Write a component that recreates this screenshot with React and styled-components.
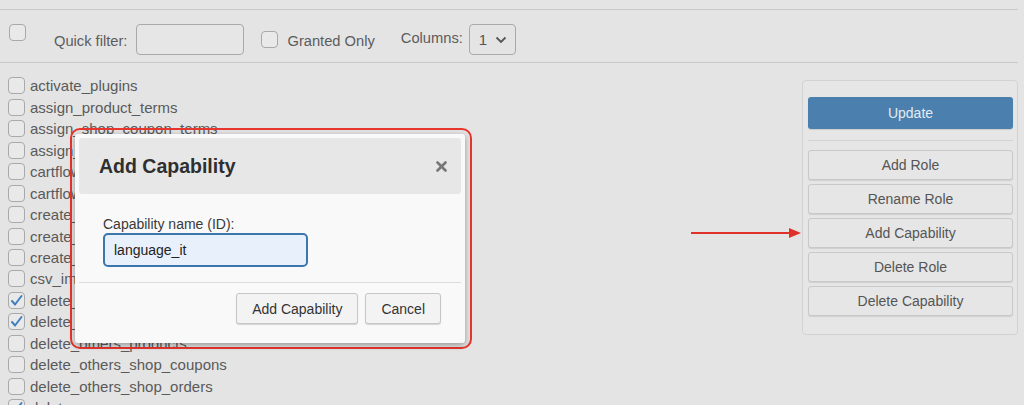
import React from 'react';
import styled, { createGlobalStyle } from 'styled-components';

const GlobalStyle = createGlobalStyle`
  html, body {
    margin: 0;
    padding: 0;
    height: 405px;
    overflow: hidden;
    background: #e4e4e4;
    font-family: "Liberation Sans", Arial, sans-serif;
    color: #585858;
  }
`;

const capabilities = [
  { name: 'activate_plugins' },
  { name: 'assign_product_terms' },
  { name: 'assign_shop_coupon_terms' },
  { name: 'assign_shop_order_terms' },
  { name: 'cartflows_manage_flows_steps' },
  { name: 'cartflows_manage_settings' },
  { name: 'create_posts' },
  { name: 'create_roles' },
  { name: 'create_users' },
  { name: 'csv_import' },
  { name: 'delete_others_pages', checked: true },
  { name: 'delete_others_posts', checked: true },
  { name: 'delete_others_products' },
  { name: 'delete_others_shop_coupons' },
  { name: 'delete_others_shop_orders' },
  { name: 'delete_pages', checked: true },
];

const panelButtons = ['Add Role', 'Rename Role', 'Add Capability', 'Delete Role', 'Delete Capability'];

function Check({ checked, ...rest }) {
  return (
    <Box {...rest}>
      {checked && (
        <svg width="13" height="13" viewBox="0 0 13 13">
          <path d="M2 7 L5 10.5 L11.5 2" fill="none" stroke="#3f7fbf" strokeWidth="2" strokeLinecap="round" />
        </svg>
      )}
    </Box>
  );
}

export default function App() {
  return (
    <>
      <GlobalStyle />
      <Page>
        <Toolbar>
          <Check $lift />
          <Label $ml={28}>Quick filter:</Label>
          <FilterInput />
          <Check $ml={17} />
          <Label $ml={9}>Granted Only</Label>
          <Label $ml={26} $up>Columns:</Label>
          <Select>
            <span>1</span>
            <svg width="12" height="8" viewBox="0 0 12 8">
              <path d="M1.5 1.5 L6 6 L10.5 1.5" fill="none" stroke="#555" strokeWidth="1.8" />
            </svg>
          </Select>
        </Toolbar>
        <Main>
          <List>
            {capabilities.map((cap) => (
              <Row key={cap.name}>
                <Check checked={cap.checked} />
                <span>{cap.name}</span>
              </Row>
            ))}
          </List>
          <Panel>
            <UpdateButton>Update</UpdateButton>
            <PanelRule />
            {panelButtons.map((b) => (
              <PanelButton key={b}>{b}</PanelButton>
            ))}
          </Panel>
        </Main>

        <Arrow width="112" height="14" viewBox="0 0 112 14">
          <line x1="0" y1="7" x2="100" y2="7" stroke="#e0302a" strokeWidth="2" />
          <path d="M98 2 L110 7 L98 12 Z" fill="#e0302a" />
        </Arrow>

        <Highlight>
          <Dialog>
            <DialogHeader>
              <Title>Add Capability</Title>
              <Close>
                <svg width="11" height="11" viewBox="0 0 11 11">
                  <path d="M1.5 1.5 L9.5 9.5 M9.5 1.5 L1.5 9.5" stroke="#777" strokeWidth="2.6" strokeLinecap="round" />
                </svg>
              </Close>
            </DialogHeader>
            <DialogBody>
              <FieldLabel>Capability name (ID):</FieldLabel>
              <NameInput>language_it</NameInput>
            </DialogBody>
            <DialogFooter>
              <DialogButton>Add Capability</DialogButton>
              <DialogButton>Cancel</DialogButton>
            </DialogFooter>
          </Dialog>
        </Highlight>
      </Page>
    </>
  );
}

const Page = styled.div`
  position: relative;
  width: 1018px;
  height: 405px;
  padding-top: 9px;
  box-sizing: border-box;
  overflow: hidden;
`;

const Toolbar = styled.div`
  height: 54px;
  box-sizing: border-box;
  border-top: 1px solid #c9c9c9;
  border-bottom: 1px solid #c9c9c9;
  display: flex;
  align-items: center;
  padding: 7px 0 0 9px;
`;

const Box = styled.span`
  flex: none;
  width: 17px;
  height: 17px;
  box-sizing: border-box;
  border: 1px solid #a9a9a9;
  border-radius: 4px;
  background: #e9e9e9;
  display: inline-flex;
  align-items: center;
  justify-content: center;
  margin-left: ${(p) => (p.$ml || 0)}px;
  margin-bottom: ${(p) => (p.$lift ? 15 : 0)}px;
`;

const Label = styled.span`
  font-size: 14.7px;
  color: #5c5c5c;
  margin-left: ${(p) => p.$ml || 0}px;
  position: relative;
  top: ${(p) => (p.$up ? -2 : 1)}px;
`;

const FilterInput = styled.div`
  width: 108px;
  height: 31px;
  box-sizing: border-box;
  margin-left: 9px;
  border: 1px solid #a9a9a9;
  border-radius: 4px;
  background: #e6e6e6;
`;

const Select = styled.div`
  width: 47px;
  height: 31px;
  box-sizing: border-box;
  margin-left: 6px;
  border: 1px solid #a9a9a9;
  border-radius: 4px;
  display: flex;
  align-items: center;
  gap: 8px;
  padding-left: 9px;
  font-size: 15px;
  color: #555;
`;

const Main = styled.div`
  display: flex;
  align-items: flex-start;
`;

const List = styled.div`
  flex: 1;
  padding: 12px 0 0 8px;
`;

const Row = styled.div`
  height: 21.48px;
  display: flex;
  align-items: center;
  gap: 5px;
  font-size: 15px;
  color: #5a5a5a;
  white-space: nowrap;
`;

const Panel = styled.div`
  width: 216px;
  margin-top: 17px;
  box-sizing: border-box;
  border: 1px solid #d2d2d2;
  border-radius: 4px;
  background: #e6e6e6;
  padding: 16px 4px 18px 5px;
  display: flex;
  flex-direction: column;
  gap: 4px;
`;

const UpdateButton = styled.div`
  height: 32px;
  border-radius: 3px;
  background: #4b7fae;
  color: #e4ebf2;
  font-size: 14px;
  display: flex;
  align-items: center;
  justify-content: center;
  box-shadow: 0 1px 1px rgba(0, 0, 0, 0.12);
`;

const PanelRule = styled.div`
  height: 1px;
  background: #d4d4d4;
  margin: 7px 0 5px;
`;

const PanelButton = styled.div`
  height: 30px;
  box-sizing: border-box;
  border: 1px solid #c9c9c9;
  border-radius: 3px;
  background: #e6e6e6;
  color: #555;
  font-size: 14px;
  display: flex;
  align-items: center;
  justify-content: center;
  box-shadow: 0 1px 1px rgba(0, 0, 0, 0.1);
`;

const Arrow = styled.svg`
  position: absolute;
  left: 691px;
  top: 226px;
`;

const Highlight = styled.div`
  position: absolute;
  left: 70px;
  top: 128px;
  width: 402px;
  height: 221px;
  box-sizing: border-box;
  border: 2.5px solid #e8352d;
  border-radius: 10px;
  padding: 4px 6px 0 3px;
`;

const Dialog = styled.div`
  width: 390px;
  height: 209px;
  box-sizing: border-box;
  background: #f9f9f9;
  border-radius: 3px;
  padding: 4px 4px 0;
  box-shadow: 0 2px 6px rgba(0, 0, 0, 0.35);
  display: flex;
  flex-direction: column;
`;

const DialogHeader = styled.div`
  height: 56px;
  background: #e7e7e7;
  border-radius: 3px;
  display: flex;
  align-items: center;
  justify-content: space-between;
  padding: 0 14px 0 20px;
`;

const Title = styled.div`
  font-size: 19.5px;
  font-weight: 700;
  color: #2f2f2f;
`;

const Close = styled.div`
  display: flex;
  align-items: center;
`;

const DialogBody = styled.div`
  padding: 22px 0 15px 24px;
  border-bottom: 1px solid #dcdcdc;
`;

const FieldLabel = styled.div`
  font-size: 14px;
  color: #3a3a3a;
  line-height: 16px;
  margin-bottom: 1px;
`;

const NameInput = styled.div`
  width: 205px;
  height: 34px;
  box-sizing: border-box;
  border: 2px solid #3b76ad;
  border-radius: 5px;
  background: #e8f0fb;
  font-size: 14px;
  color: #222;
  display: flex;
  align-items: center;
  padding-left: 9px;
`;

const DialogFooter = styled.div`
  display: flex;
  justify-content: flex-end;
  gap: 7px;
  padding: 10px 20px 0 0;
`;

const DialogButton = styled.div`
  height: 31px;
  box-sizing: border-box;
  padding: 0 15px;
  border: 1px solid #c6c6c6;
  border-radius: 3px;
  background: #f3f3f3;
  color: #333;
  font-size: 14px;
  display: flex;
  align-items: center;
  box-shadow: 0 1px 1px rgba(0, 0, 0, 0.15);
`;
